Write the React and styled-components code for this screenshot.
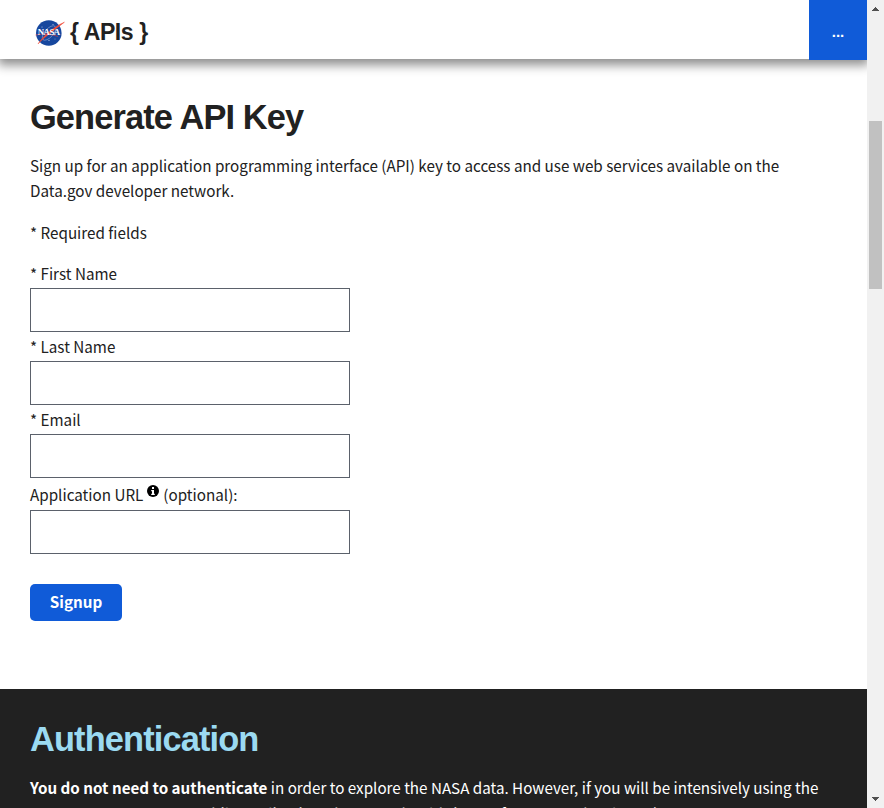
import React from "react";
import styled, { createGlobalStyle } from "styled-components";

const GlobalStyle = createGlobalStyle`
  * { box-sizing: border-box; }
  html, body { margin: 0; padding: 0; height: 100%; overflow: hidden; }
  body { background: #fff; color: #212121; font: 15.22px/25px "Noto Sans CJK SC", sans-serif; }
  h1, h2, p { margin: 0; }
`;

const Window = styled.div`
  display: flex;
  width: 884px;
  height: 808px;
  overflow: hidden;
`;

const Page = styled.div`
  width: 867px;
  height: 808px;
  overflow: hidden;
`;

const Header = styled.header`
  position: relative;
  display: flex;
  justify-content: space-between;
  height: 59px;
  padding-left: 34px;
  background: #fff;
  box-shadow: 0 4px 10px 2px rgba(0, 0, 0, 0.45);
`;

const Brand = styled.div`
  display: flex;
  align-items: center;
  height: 65px;
  gap: 5px;
  font: bold 23px/30px "Liberation Sans", sans-serif;
  letter-spacing: -0.4px;
  white-space: nowrap;
`;

const BrandText = styled.span`
  padding-bottom: 2px;
`;

const MenuButton = styled.button`
  width: 58px;
  height: 60px;
  padding: 3px 0 0;
  border: 0;
  background: #105bd8;
  color: #fff;
  font: bold 15px/20px "Liberation Sans", sans-serif;
`;

const SignupSection = styled.main`
  height: 630px;
  padding: 38px 30px 0;
`;

const Title = styled.h1`
  font: bold 34.4px/40px "Liberation Sans", sans-serif;
  letter-spacing: -0.88px;
  color: ${(p) => p.$color || "#212121"};
`;

const Intro = styled.p`
  margin-top: 16px;
  white-space: nowrap;
`;

const Required = styled.p`
  margin-top: 17px;
`;

const Form = styled.form`
  display: flex;
  flex-direction: column;
  align-items: flex-start;
  margin-top: 16px;
`;

const Label = styled.label`
  display: flex;
  height: ${(p) => p.$height || 29}px;
  padding-top: ${(p) => p.$top || 0}px;
  white-space: pre;
`;

const Input = styled.input`
  width: 320px;
  height: 44px;
  border: 1px solid #5b616b;
  border-radius: 0;
  background: #fff;
  outline: 0;
`;

const InfoIcon = styled.svg`
  width: 12px;
  height: 12px;
  margin: 3px 4px 0 4px;
`;

const Submit = styled.button`
  width: 92px;
  height: 37px;
  margin-top: 30px;
  padding: 0 0 2px;
  border: 0;
  border-radius: 5px;
  background: #105bd8;
  color: #fff;
  font: bold 15.2px/35px "Noto Sans CJK SC", sans-serif;
`;

const AuthSection = styled.section`
  height: 119px;
  padding: 30px 30px 0;
  background: #212121;
  color: #fff;
`;

const AuthText = styled.p`
  margin-top: 15px;
  font-size: 15.2px;
  line-height: 26px;
  white-space: nowrap;
`;

const ScrollTrack = styled.div`
  display: flex;
  flex-direction: column;
  align-items: center;
  width: 17px;
  height: 808px;
  background: #f1f1f1;
`;

const ScrollArrow = styled.svg`
  width: 17px;
  height: 17px;
  fill: #505050;
`;

const ScrollThumb = styled.div`
  width: 13px;
  height: 168px;
  margin: 104px 0 502px;
  background: #c1c1c1;
`;

const Logo = () => (
  <svg width="31" height="28" viewBox="0 0 31 28">
    <circle cx="14.8" cy="14" r="12.8" fill="#17479e" />
    <ellipse cx="15" cy="14" rx="9" ry="4.2" transform="rotate(-48 15 14)" fill="none" stroke="#8ea7d5" strokeWidth=".6" />
    <g fill="#c9d5ed">
      <circle cx="8" cy="8" r=".5" /><circle cx="19" cy="5.5" r=".5" />
      <circle cx="15" cy="21.5" r=".6" /><circle cx="21" cy="20" r=".4" />
    </g>
    <path d="M4 24.9 C9 17.5 19 8 30.4 3.2 C23 9 12 16.5 4 24.9Z" fill="#f04b38" stroke="#f04b38" strokeWidth=".5" />
    <path d="M1.5 16 Q13 13.5 24 17.5" fill="none" stroke="#ee4035" strokeWidth=".6" />
    <text x="14.7" y="16.4" textAnchor="middle" textLength="22" lengthAdjust="spacingAndGlyphs" fill="#fff" fontFamily="Liberation Serif, serif" fontWeight="bold" fontSize="7.5">NASA</text>
  </svg>
);

export default function App() {
  return (
    <>
      <GlobalStyle />
      <Window>
        <Page>
          <Header>
            <Brand><Logo /><BrandText>{"{ APIs }"}</BrandText></Brand>
            <MenuButton>...</MenuButton>
          </Header>
          <SignupSection>
            <Title>Generate API Key</Title>
            <Intro>
              Sign up for an application programming interface (API) key to access and use web services available on the<br />
              Data.gov developer network.
            </Intro>
            <Required>* Required fields</Required>
            <Form>
              <Label $height={27}>* First Name</Label>
              <Input />
              <Label $top={2}>* Last Name</Label>
              <Input />
              <Label $top={2}>* Email</Label>
              <Input />
              <Label $height={32} $top={4}>
                Application URL
                <InfoIcon viewBox="0 0 12 12">
                  <circle cx="6" cy="6" r="6" fill="#000" />
                  <path d="M5 2h2v2H5zM4.2 5H7v3.7h.8V10H4.2V8.7H5V6.2h-.8z" fill="#fff" />
                </InfoIcon>
                (optional):
              </Label>
              <Input />
              <Submit type="button">Signup</Submit>
            </Form>
          </SignupSection>
          <AuthSection>
            <Title as="h2" $color="#9bdaf1">Authentication</Title>
            <AuthText>
              <b>You do not need to authenticate</b> in order to explore the NASA data. However, if you will be intensively using the<br />
              APIs to, say, support a mobile application, then you should sign up for a NASA developer key.
            </AuthText>
          </AuthSection>
        </Page>
        <ScrollTrack>
          <ScrollArrow viewBox="0 0 17 17"><path d="M5 11h7v-1h-1V9h-1V8H9V7H8v1H7v1H6v1H5z" /></ScrollArrow>
          <ScrollThumb />
          <ScrollArrow viewBox="0 0 17 17"><path d="M5 6h7v1h-1v1h-1v1H9v1H8V9H7V8H6V7H5z" /></ScrollArrow>
        </ScrollTrack>
      </Window>
    </>
  );
}
